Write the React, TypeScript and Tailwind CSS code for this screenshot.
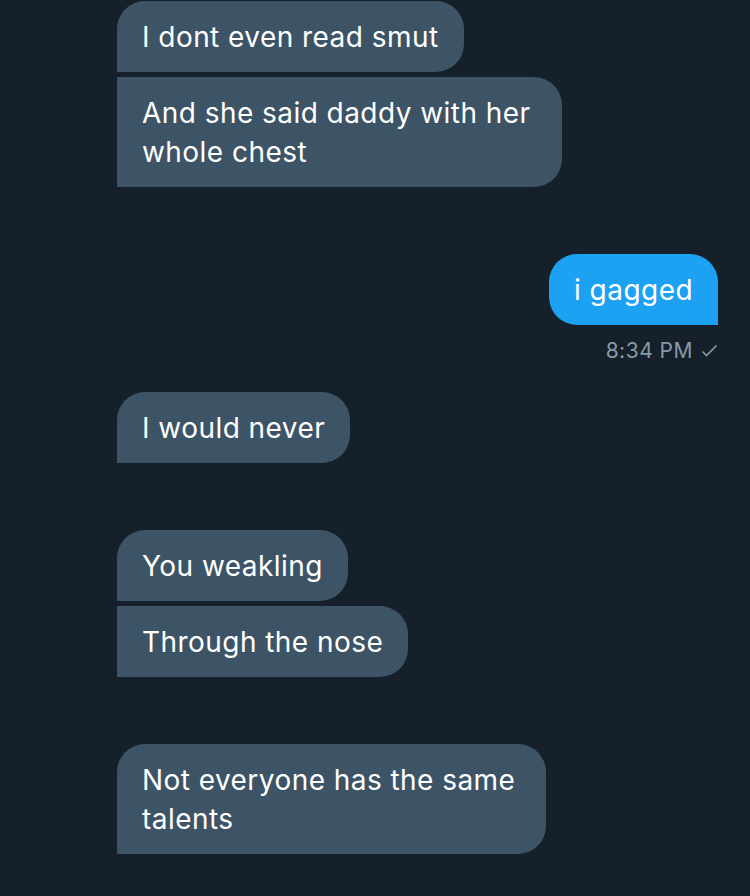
import React from 'react';

type Corner = 'first' | 'middle' | 'single';

const font = { fontFamily: 'Inter, "Noto Sans", sans-serif' };

function Incoming({ text, pos, className = '' }: { text: string; pos: Corner; className?: string }) {
  // first/single: top-left rounded; all incoming have square bottom-left
  const corners =
    pos === 'middle' ? 'rounded-r-[28px] rounded-l-none' : 'rounded-[28px] rounded-bl-none';
  return (
    <div
      className={`self-start bg-[#3d5466] text-white text-[28px] leading-[39px] tracking-[0.45px] px-[25px] pt-[17px] pb-[15px] ${corners} ${className}`}
    >
      {text}
    </div>
  );
}

export default function App() {
  return (
    <div className="w-[750px] h-[896px] overflow-hidden bg-[#15202b] flex flex-col pl-[117px] pr-[32px] pt-[1px]" style={font}>
      <Incoming text="I dont even read smut" pos="first" />
      <Incoming text="And she said daddy with her whole chest" pos="middle" className="mt-[5px] w-[445px]" />

      <div className="self-end mt-[67px] bg-[#1da1f2] text-white text-[28px] leading-[39px] tracking-[0.45px] px-[25px] pt-[17px] pb-[15px] rounded-[28px] rounded-br-none">
        i gagged
      </div>
      <div className="self-end mt-[14px] flex items-center gap-[8px] text-[#8899a6] text-[21px] leading-[24px] tracking-[0.5px]">
        <span>8:34 PM</span>
        <svg width="17" height="14" viewBox="0 0 17 14" fill="none" stroke="currentColor" strokeWidth="1.6">
          <path d="M1.5 7.5 L5.5 11.5 L15.5 1.5" />
        </svg>
      </div>

      <Incoming text="I would never" pos="single" className="mt-[29px]" />

      <Incoming text="You weakling" pos="first" className="mt-[67px]" />
      <Incoming text="Through the nose" pos="middle" className="mt-[5px]" />

      <Incoming text="Not everyone has the same talents" pos="single" className="mt-[67px] w-[429px]" />
    </div>
  );
}
